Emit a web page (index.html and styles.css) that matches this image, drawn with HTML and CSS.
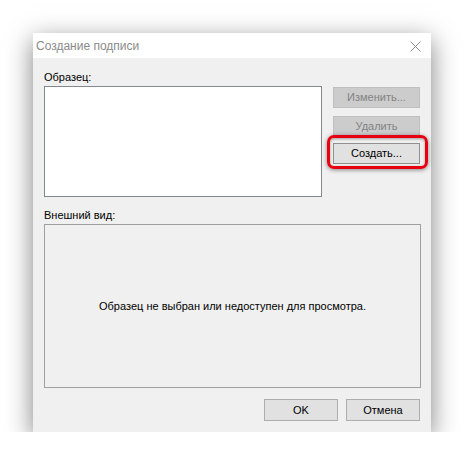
FILE: index.html
```html
<!DOCTYPE html>
<html lang="ru">
<head>
<meta charset="utf-8">
<title>Создание подписи</title>
<link rel="stylesheet" href="styles.css">
</head>
<body>
<div class="dialog">
  <div class="titlebar">
    <span class="title">Создание подписи</span>
    <svg class="close" width="11" height="11" viewBox="0 0 11 11"><path d="M0.5 0.5 L10.5 10.5 M10.5 0.5 L0.5 10.5" stroke="#8c8c8c" stroke-width="1" fill="none"/></svg>
  </div>
  <div class="content">
    <div class="label">Образец:</div>
    <div class="top-row">
      <div class="listbox"></div>
      <div class="side-buttons">
        <button class="btn disabled">Изменить...</button>
        <button class="btn disabled">Удалить</button>
        <div class="highlight-wrap">
          <button class="btn focused">Создать...</button>
        </div>
      </div>
    </div>
    <div class="label label-preview">Внешний вид:</div>
    <div class="preview">Образец не выбран или недоступен для просмотра.</div>
    <div class="footer">
      <button class="btn">OK</button>
      <button class="btn">Отмена</button>
    </div>
  </div>
</div>
</body>
</html>
```
FILE: styles.css
```css
html, body {
  margin: 0;
  padding: 0;
  background: #ffffff;
}
body {
  font-family: "Liberation Sans", Arial, sans-serif;
  font-size: 11px;
  color: #000;
}
.dialog {
  margin: 33px 0 0 33px;
  width: 398px;
  height: 399px;
  background: #f0f0f0;
  box-shadow: 0 7px 24px rgba(0, 0, 0, 0.5);
  display: flex;
  flex-direction: column;
}
.titlebar {
  height: 25px;
  background: #ffffff;
  display: flex;
  align-items: center;
  justify-content: space-between;
  padding: 0 10px 0 3px;
}
.title {
  color: #8a8a8a;
  font-size: 12px;
  padding-top: 1px;
}
.close {
  display: block;
  margin-top: 1px;
}
.content {
  padding: 0 10px 0 11px;
  display: flex;
  flex-direction: column;
}
.label {
  height: 14px;
  line-height: 14px;
  margin-top: 12px;
  margin-bottom: 2px;
}
.top-row {
  display: flex;
  gap: 11px;
}
.listbox {
  width: 276px;
  height: 109px;
  background: #ffffff;
  border: 1px solid #828790;
}
.side-buttons {
  display: flex;
  flex-direction: column;
  gap: 8px;
  padding-top: 1px;
}
.btn {
  font-family: inherit;
  font-size: 11px;
  width: 87px;
  height: 21px;
  padding: 0;
  margin: 0;
  background: #e1e1e1;
  border: 1px solid #adadad;
  color: #000;
  line-height: 19px;
}
.btn.disabled {
  background: #cccccc;
  border-color: #bfbfbf;
  color: #838383;
}
.highlight-wrap {
  position: relative;
  margin-top: -2px;
}
.highlight-wrap::after {
  content: "";
  position: absolute;
  left: -6px;
  right: -8px;
  top: -8px;
  bottom: -5px;
  border: 3px solid #e8000e;
  border-radius: 7px;
  box-shadow: 0 1px 4px rgba(0, 0, 0, 0.45), inset 0 1px 3px rgba(0, 0, 0, 0.35);
  pointer-events: none;
}
.btn.focused {
  border-color: #8f8f8f;
}
.label-preview {
  margin-top: 11px;
}
.preview {
  width: 375px;
  height: 162px;
  border: 1px solid #a0a0a0;
  background: #f0f0f0;
  display: flex;
  align-items: center;
  justify-content: center;
}
.footer {
  display: flex;
  justify-content: flex-end;
  gap: 8px;
  margin-top: 11px;
  padding-right: 1px;
}
.footer .btn {
  width: 74px;
  height: 22px;
}
```
